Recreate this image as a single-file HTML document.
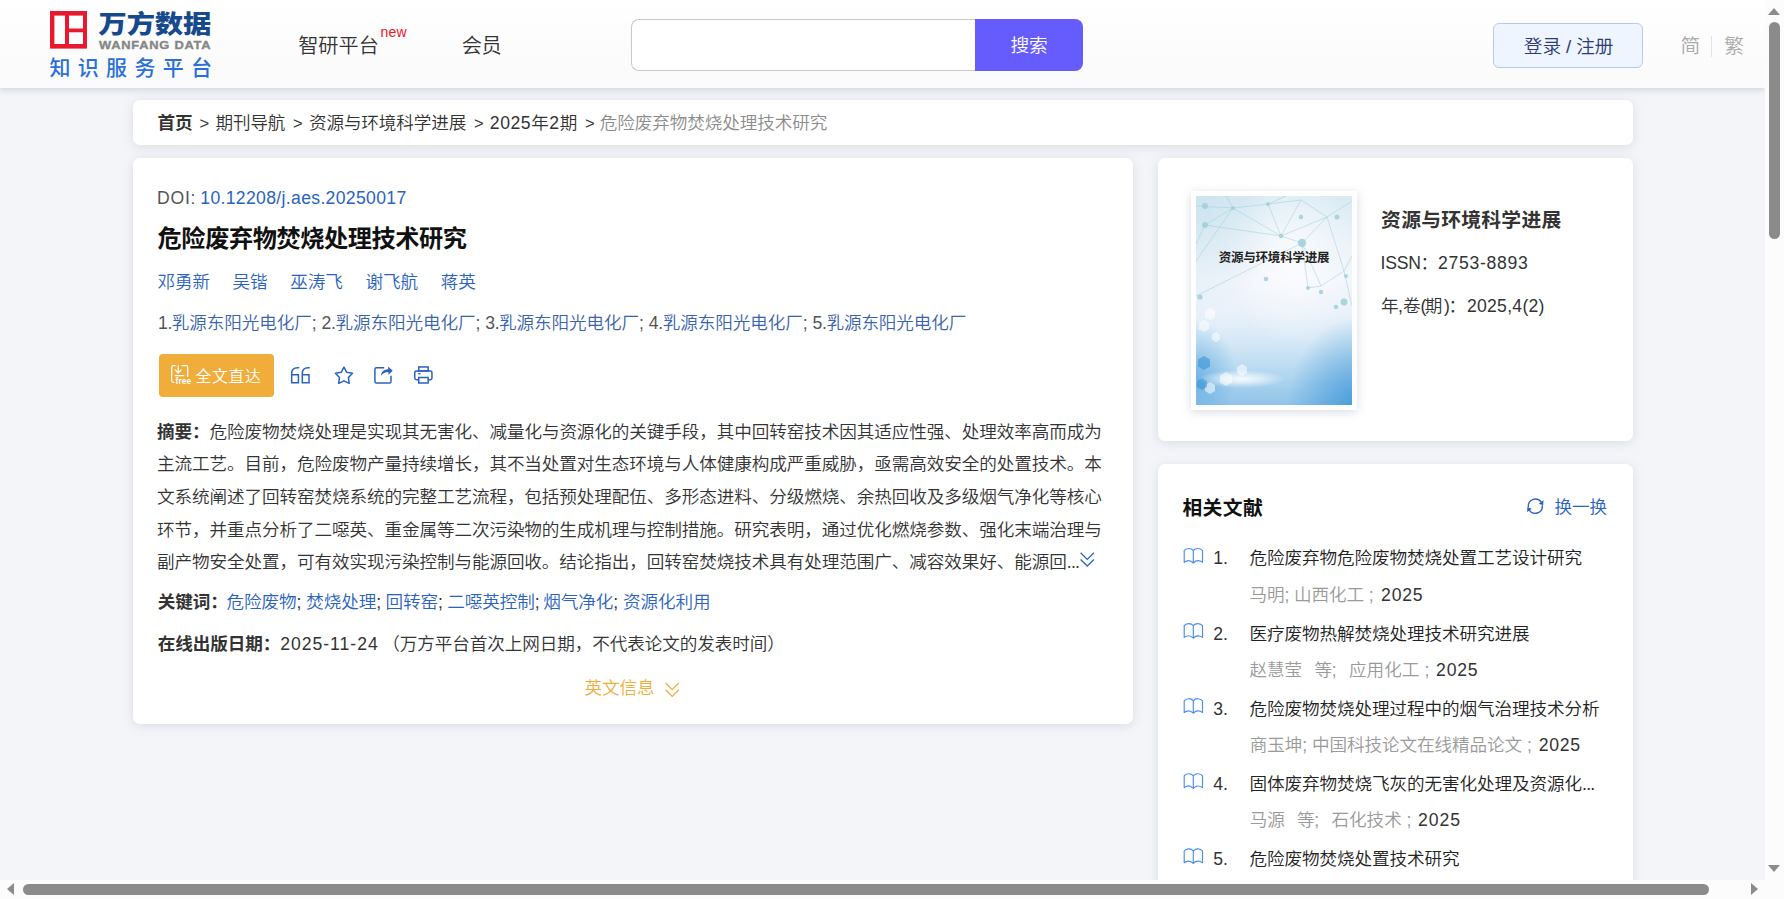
<!DOCTYPE html>
<html lang="zh-CN">
<head>
<meta charset="utf-8">
<title>危险废弃物焚烧处理技术研究</title>
<style>
*{box-sizing:border-box;margin:0;padding:0}
html,body{width:1784px;height:899px;overflow:hidden}
body{background:#f3f5f9;font-family:"Liberation Sans","Noto Sans CJK SC",sans-serif;color:#333;font-size:17.6px;position:relative}
.abs{position:absolute;white-space:nowrap}
.t{position:absolute;white-space:nowrap;line-height:32px}
#page{position:absolute;left:0;top:0;width:1765px;height:880px;overflow:hidden;background:#f3f5f9}
#hdr{position:absolute;left:0;top:0;width:1765px;height:88px;background:linear-gradient(#ffffff,#fafafa);box-shadow:0 2px 6px rgba(120,130,150,.28)}
#sbox{position:absolute;left:631px;top:19px;width:346px;height:52px;border:1px solid #c9c9c9;border-right:none;border-radius:8px 0 0 8px;background:#fff}
#sbtn{position:absolute;left:975.300px;top:19px;width:107.700px;height:52px;background:#665cfe;border-radius:0 8px 8px 0}
#login{position:absolute;left:1493px;top:23px;width:150px;height:45px;background:#eef5fe;border:1px solid #b5cbee;border-radius:6px}
.card{position:absolute;background:#fff;border-radius:7px;box-shadow:0 2px 11px rgba(95,105,125,.17)}
#crumb{left:133px;top:100px;width:1500px;height:45px}
#main{left:133px;top:158px;width:1000px;height:566px}
#jcard{left:1158px;top:158px;width:475px;height:282.500px}
#rcard{left:1158px;top:464px;width:475px;height:440px}
#vsb{position:absolute;left:1765px;top:0;width:19px;height:880px;background:#fcfcfc}
#hsb{position:absolute;left:0;top:880px;width:1784px;height:19px;background:#fcfcfc}
.thumb{position:absolute;background:#8b8b8b;border-radius:6px}
.tri{position:absolute;width:0;height:0}
</style>
</head>
<body>
<div id="page">

<div id="hdr">
  <svg class="abs" style="left:50px;top:11.2px" width="37" height="37.6" viewBox="0 0 37 37.6">
    <rect x="0" y="0" width="37" height="37.6" fill="#e8192c"/>
    <rect x="4.4" y="4.6" width="10.6" height="28.4" fill="#fff"/>
    <rect x="19" y="4.600" width="14" height="12.9" fill="#fff"/>
    <rect x="19" y="21.3" width="14" height="11.7" fill="#fff"/>
  </svg>
  <div class="abs" id="lg1" style="left:98.6px;top:3.2px;font-size:28.3px;font-weight:900;color:#164a8d;line-height:40px;letter-spacing:-0.2px;transform:scaleY(.89);transform-origin:0 32.6px">万方数据</div>
  <div class="abs" id="lg2" style="left:99.3px;top:37.8px;font-size:11.2px;font-weight:bold;color:#868686;-webkit-text-stroke:0.35px #868686;line-height:14px;letter-spacing:0.66px;transform:scaleX(1.15);transform-origin:0 0">WANFANG DATA</div>
  <div class="abs" id="lg3" style="left:49.5px;top:53px;font-size:21px;color:#2a6fdb;line-height:30px;letter-spacing:7.3px;font-weight:500">知识服务平台</div>
  <div id="sbox"></div>
  <div id="sbtn"></div>
  <div id="login"></div>
  <div class="abs" style="left:1711px;top:36px;width:1px;height:21px;background:#e3e3e3"></div>
</div>

<div class="card" id="crumb"></div>
<div class="card" id="main">
  <div class="abs" id="ftbtn" style="left:26px;top:196px;width:115px;height:43px;background:#f0ad3a;border-radius:4px"></div>
<svg class="abs" style="left:27px;top:202px" width="290" height="32" viewBox="160 360 290 32">
  <g fill="none" stroke="#fff" stroke-width="1.25" stroke-linecap="round" stroke-linejoin="round">
    <path d="M175.3 365.7H173.2Q171.7 365.7 171.7 367.2V380.8Q171.7 382.3 173.2 382.3H174"/>
    <path d="M178.2 365.5V372.8M175.3 370L178.2 373L181.1 370"/>
    <path d="M182 365.7H186.200Q187.700 365.7 187.700 367.2V376.3"/>
    <path d="M175.300 375.600H183.800"/>
  </g>
  <text x="175.600" y="383.700" font-size="8.3" font-weight="bold" fill="#fff" font-family="'Liberation Sans',sans-serif" letter-spacing="0.1">free</text>
  <g fill="none" stroke="#2a62c0" stroke-width="1.5" stroke-linejoin="miter">
    <path d="M299.2 367.7H297.500Q291.700 367.700 291.700 373.500V382.800H298.400V374.700H291.700"/>
    <path d="M309.800 367.700H308.100Q302.300 367.700 302.300 373.500V382.800H309V374.700H302.300"/>
    <path d="M343.95 367.10 L346.71 372.30 L352.51 373.32 L348.42 377.55 L349.24 383.38 L343.95 380.80 L338.66 383.38 L339.48 377.55 L335.39 373.32 L341.19 372.30Z" stroke-linejoin="round"/>
    <path d="M384.200 367.800H376.400Q374.900 367.800 374.900 369.300V381.500Q374.900 383 376.400 383H389.500Q391 383 391 381.500V375.800"/>
    <rect x="418.750" y="366.950" width="9.400" height="4" />
    <rect x="414.750" y="370.900" width="17.200" height="8.800" rx="1.600"/>
    <rect x="418.750" y="377.500" width="9.400" height="5.500" fill="#fff"/>
    <path d="M418.200 373.700H420.600" stroke-width="1.300"/>
  </g>
  <path d="M380.800 376C381.300 371.600 384 369.300 388.200 369.200L388.100 366.400L392.700 370.700L388.500 374.700L388.400 372.100C385 372.100 382.600 373.300 380.800 376Z" fill="#2a62c0"/>
</svg>
<svg class="abs" style="left:940px;top:390px" width="30" height="24" viewBox="1073 548 30 24"><g fill="none" stroke="#2a67cc" stroke-width="1.35"><path d="M1080.600 552.800L1087.250 559.400L1093.900 552.800"/><path d="M1080.600 559.500L1087.250 566.100L1093.900 559.500"/></g></svg>
<svg class="abs" style="left:527px;top:520px" width="30" height="24" viewBox="660 678 30 24"><g fill="none" stroke="#f0ad3a" stroke-width="1.25"><path d="M665.600 683L672.200 689.700L678.800 683"/><path d="M665.600 689.700L672.200 696.400L678.800 689.700"/></g></svg>
</div>
<div class="card" id="jcard">
  <div class="abs" id="cover" style="left:33px;top:33px;width:166px;height:219px;background:#fff;box-shadow:0 2px 9px rgba(120,140,170,.30)">
    <svg class="abs" style="left:5px;top:5px" width="156" height="209" viewBox="0 0 156 209">
      <defs>
        <linearGradient id="cg1" x1="0" y1="0" x2="0" y2="1">
          <stop offset="0" stop-color="#d9eaf3"/><stop offset=".2" stop-color="#e8f1f8"/><stop offset=".4" stop-color="#f2f5fb"/><stop offset=".56" stop-color="#e9f1fa"/><stop offset=".7" stop-color="#d5e8f6"/><stop offset=".85" stop-color="#b3d7f0"/><stop offset="1" stop-color="#90c4e9"/>
        </linearGradient>
        <radialGradient id="cg2" cx=".62" cy=".3" r=".42"><stop offset="0" stop-color="#fff" stop-opacity=".7"/><stop offset="1" stop-color="#fff" stop-opacity="0"/></radialGradient>
        <radialGradient id="cg3" cx="1.04" cy="1.04" r=".46"><stop offset="0" stop-color="#3a95d8" stop-opacity=".9"/><stop offset="1" stop-color="#3a95d8" stop-opacity="0"/></radialGradient>
        <radialGradient id="cg4" cx="0" cy=".86" r=".26"><stop offset="0" stop-color="#4a9fdc" stop-opacity=".6"/><stop offset="1" stop-color="#4a9fdc" stop-opacity="0"/></radialGradient>
        <radialGradient id="cg5" cx=".5" cy=".5" r=".5"><stop offset="0" stop-color="#fff" stop-opacity="1"/><stop offset=".35" stop-color="#fff" stop-opacity=".7"/><stop offset="1" stop-color="#fff" stop-opacity="0"/></radialGradient>
        <radialGradient id="cg6" cx="0" cy=".08" r=".5"><stop offset="0" stop-color="#b7d9e8" stop-opacity=".4"/><stop offset="1" stop-color="#b7d9e8" stop-opacity="0"/></radialGradient>
      </defs>
      <rect width="156" height="209" fill="url(#cg1)"/>
      <rect width="156" height="209" fill="url(#cg2)"/>
      <rect width="156" height="209" fill="url(#cg3)"/>
      <rect width="156" height="209" fill="url(#cg4)"/>
      <rect width="156" height="209" fill="url(#cg6)"/>
      <g stroke="#9fcfd9" stroke-width=".7" fill="none" opacity=".75">
        <path d="M0 10 L37 12 L9 29 L0 48 M37 12 L72 8 L85 40 L37 12 M72 8 L105 4 L85 40 L131 21 L105 4 M131 21 L156 5 M131 21 L148 75 L156 60 M85 40 L106 47 L131 21 M106 47 L125 90 L148 75 M9 29 L85 40 M0 65 L37 12 M0 100 L60 70 L106 47 M125 90 L112 92 L106 47 M72 8 L90 0 M37 12 L30 0 M148 75 L156 110"/>
      </g>
      <g fill="#9fd0da" opacity=".85">
        <circle cx="9" cy="10" r="3"/><circle cx="37" cy="12" r="2"/><circle cx="9" cy="29" r="3"/><circle cx="72" cy="8" r="2"/><circle cx="85" cy="40" r="2.2"/><circle cx="105" cy="21" r="2.2"/><circle cx="106" cy="47" r="4.2"/><circle cx="141" cy="21" r="2.5"/><circle cx="70" cy="83" r="2.3"/><circle cx="112" cy="92" r="2"/><circle cx="125" cy="96" r="2.2"/><circle cx="148" cy="106" r="3.4"/><circle cx="4" cy="101" r="2.6"/><circle cx="140" cy="111" r="2.2"/><circle cx="150" cy="80" r="2"/>
      </g>
      <g fill="#fff" opacity=".55">
        <path d="M14 112l5 3v6l-5 3l-5-3v-6z M8 124l5 3v6l-5 3l-5-3v-6z M20 136l4 2.5v5l-4 2.5l-4-2.5v-5z M30 176l6 3.5v7l-6 3.5l-6-3.5v-7z M14 186l5 3v6l-5 3l-5-3v-6z M46 168l5 3v6l-5 3l-5-3v-6z"/>
      </g>
      <g fill="#2f8fd6" opacity=".55"><path d="M8 160l6 3.5v7l-6 3.5l-6-3.5v-7z M6 182l5 3v6l-5 3l-5-3v-6z"/></g>
      <ellipse cx="46" cy="183" rx="44" ry="9" fill="url(#cg5)" opacity=".9"/>
      <text x="78" y="66" text-anchor="middle" font-size="12.5" font-weight="bold" fill="#222" letter-spacing="-0.2" font-family="'Liberation Sans','Noto Sans CJK SC',sans-serif">资源与环境科学进展</text>
    </svg>
  </div>
</div>
<div class="card" id="rcard">
<svg class="abs" style="left:0;top:0" width="475" height="416" viewBox="1158 464 475 416">
<g fill="none" stroke="#4a8cf0" stroke-width="1.15" stroke-linejoin="round">
<path transform="translate(0 0.0)" d="M1184.2 562.3V550.6C1186 548 1191 547.600 1193.300 550.600C1195.600 547.600 1200.600 548 1202.500 550.600V562.300C1199.500 560.200 1196 560.300 1193.300 563C1190.600 560.300 1187 560.200 1184.200 562.300ZM1193.300 550.600V563"/>
<path transform="translate(0 75.1)" d="M1184.2 562.3V550.6C1186 548 1191 547.600 1193.300 550.600C1195.600 547.600 1200.600 548 1202.500 550.600V562.300C1199.500 560.200 1196 560.300 1193.300 563C1190.600 560.300 1187 560.200 1184.200 562.300ZM1193.300 550.600V563"/>
<path transform="translate(0 150.2)" d="M1184.2 562.3V550.6C1186 548 1191 547.600 1193.300 550.600C1195.600 547.600 1200.600 548 1202.500 550.600V562.300C1199.500 560.200 1196 560.300 1193.300 563C1190.600 560.300 1187 560.200 1184.200 562.300ZM1193.300 550.600V563"/>
<path transform="translate(0 225.3)" d="M1184.2 562.3V550.6C1186 548 1191 547.600 1193.300 550.600C1195.600 547.600 1200.600 548 1202.500 550.600V562.300C1199.500 560.200 1196 560.300 1193.300 563C1190.600 560.300 1187 560.200 1184.200 562.300ZM1193.300 550.600V563"/>
<path transform="translate(0 300.4)" d="M1184.2 562.3V550.6C1186 548 1191 547.600 1193.300 550.600C1195.600 547.600 1200.600 548 1202.500 550.600V562.300C1199.500 560.200 1196 560.300 1193.300 563C1190.600 560.300 1187 560.200 1184.200 562.300ZM1193.300 550.600V563"/>
</g>
<g fill="none" stroke="#2a62c0" stroke-width="1.35" stroke-linecap="round"><path d="M1528.300 506.600A7.100 7.100 0 0 1 1541.400 502.400"/><path d="M1542.300 505.800A7.100 7.100 0 0 1 1529.200 510"/></g>
<path d="M1543.500 500.300L1543.200 505.300L1538.800 503.700Z M1527.100 512.100L1527.400 507.100L1531.800 508.700Z" fill="#2a62c0"/>
</svg>
</div>

<div class="t" id="c0" style="left:298.20px;top:30.00px;font-size:20.2px;font-weight:350;color:#333;letter-spacing:-0.019px;">智研平台</div>
<div class="t" id="c1" style="left:380.40px;top:16.00px;font-size:14px;font-weight:400;color:#f3121f;letter-spacing:0.285px;">new</div>
<div class="t" id="c2" style="left:461.80px;top:30.00px;font-size:20.2px;font-weight:350;color:#333;letter-spacing:-0.594px;">会员</div>
<div class="t" id="c3" style="left:1010.60px;top:30.00px;font-size:18.7px;font-weight:350;color:#fff;letter-spacing:-0.383px;">搜索</div>
<div class="t" id="c4" style="left:1523.80px;top:31.00px;font-size:18.7px;font-weight:350;color:#2d3a76;letter-spacing:-0.097px;">登录 / 注册</div>
<div class="t" id="c5" style="left:1680.50px;top:30.00px;font-size:19.8px;font-weight:350;color:#a9a9a9;letter-spacing:0.000px;">简</div>
<div class="t" id="c6" style="left:1724.30px;top:30.00px;font-size:19.8px;font-weight:350;color:#a9a9a9;letter-spacing:0.000px;">繁</div>
<div class="t" id="c7" style="left:157.50px;top:107.00px;font-size:17.6px;font-weight:700;color:#333;letter-spacing:-0.100px;">首页</div>
<div class="t" id="c8" style="left:199.60px;top:108.00px;font-size:16.6px;font-weight:350;color:#333;letter-spacing:0.000px;">&gt;</div>
<div class="t" id="c9" style="left:215.40px;top:107.00px;font-size:17.6px;font-weight:350;color:#333;letter-spacing:-0.100px;">期刊导航</div>
<div class="t" id="c10" style="left:292.90px;top:108.00px;font-size:16.6px;font-weight:350;color:#333;letter-spacing:0.000px;">&gt;</div>
<div class="t" id="c11" style="left:308.90px;top:107.00px;font-size:17.6px;font-weight:350;color:#333;letter-spacing:-0.100px;">资源与环境科学进展</div>
<div class="t" id="c12" style="left:473.90px;top:108.00px;font-size:16.6px;font-weight:350;color:#333;letter-spacing:0.000px;">&gt;</div>
<div class="t" id="c13" style="left:489.80px;top:107.00px;font-size:17.6px;font-weight:350;color:#333;letter-spacing:0.565px;">2025年2期</div>
<div class="t" id="c14" style="left:584.90px;top:108.00px;font-size:16.6px;font-weight:350;color:#333;letter-spacing:0.000px;">&gt;</div>
<div class="t" id="c15" style="left:599.80px;top:107.00px;font-size:17.6px;font-weight:350;color:#8c8c8c;letter-spacing:-0.100px;">危险废弃物焚烧处理技术研究</div>
<div class="t" id="c16" style="left:157.00px;top:182.00px;font-size:17.6px;font-weight:350;color:#555;letter-spacing:0.779px;">DOI:</div>
<div class="t" id="c17" style="left:200.30px;top:182.00px;font-size:17.6px;font-weight:350;color:#2a62c0;letter-spacing:0.333px;">10.12208/j.aes.20250017</div>
<div class="t" id="c18" style="left:157.60px;top:223.00px;font-size:24.2px;font-weight:700;color:#111;letter-spacing:-0.420px;">危险废弃物焚烧处理技术研究</div>
<div class="t" id="c19" style="left:157.60px;top:266.00px;font-size:17.6px;font-weight:350;color:#2a62c0;letter-spacing:-0.100px;">邓勇新</div>
<div class="t" id="c20" style="left:232.50px;top:266.00px;font-size:17.6px;font-weight:350;color:#2a62c0;letter-spacing:-0.100px;">吴锴</div>
<div class="t" id="c21" style="left:290.20px;top:266.00px;font-size:17.6px;font-weight:350;color:#2a62c0;letter-spacing:-0.100px;">巫涛飞</div>
<div class="t" id="c22" style="left:365.50px;top:266.00px;font-size:17.6px;font-weight:350;color:#2a62c0;letter-spacing:-0.100px;">谢飞航</div>
<div class="t" id="c23" style="left:440.80px;top:266.00px;font-size:17.6px;font-weight:350;color:#2a62c0;letter-spacing:-0.100px;">蒋英</div>
<div class="t" id="c24" style="left:157.90px;top:307.00px;font-size:17.6px;font-weight:350;color:#555;letter-spacing:-0.258px;">1.</div>
<div class="t" id="c25" style="left:171.80px;top:307.00px;font-size:17.6px;font-weight:350;color:#3a63ad;letter-spacing:-0.100px;">乳源东阳光电化厂<span style="color:#555">;</span></div>
<div class="t" id="c26" style="left:321.55px;top:307.00px;font-size:17.6px;font-weight:350;color:#555;letter-spacing:-0.258px;">2.</div>
<div class="t" id="c27" style="left:335.45px;top:307.00px;font-size:17.6px;font-weight:350;color:#3a63ad;letter-spacing:-0.100px;">乳源东阳光电化厂<span style="color:#555">;</span></div>
<div class="t" id="c28" style="left:485.20px;top:307.00px;font-size:17.6px;font-weight:350;color:#555;letter-spacing:-0.258px;">3.</div>
<div class="t" id="c29" style="left:499.10px;top:307.00px;font-size:17.6px;font-weight:350;color:#3a63ad;letter-spacing:-0.100px;">乳源东阳光电化厂<span style="color:#555">;</span></div>
<div class="t" id="c30" style="left:648.85px;top:307.00px;font-size:17.6px;font-weight:350;color:#555;letter-spacing:-0.258px;">4.</div>
<div class="t" id="c31" style="left:662.75px;top:307.00px;font-size:17.6px;font-weight:350;color:#3a63ad;letter-spacing:-0.100px;">乳源东阳光电化厂<span style="color:#555">;</span></div>
<div class="t" id="c32" style="left:812.50px;top:307.00px;font-size:17.6px;font-weight:350;color:#555;letter-spacing:-0.258px;">5.</div>
<div class="t" id="c33" style="left:826.40px;top:307.00px;font-size:17.6px;font-weight:350;color:#3a63ad;letter-spacing:-0.100px;">乳源东阳光电化厂</div>
<div class="t" id="c34" style="left:195.40px;top:361.00px;font-size:15.8px;font-weight:350;color:#fff;letter-spacing:0.713px;">全文直达</div>
<div class="t" id="c35" style="left:157.00px;top:416.00px;font-size:17.6px;font-weight:700;color:#333;letter-spacing:-0.100px;">摘要：</div>
<div class="t" id="c36" style="left:209.50px;top:416.00px;font-size:17.6px;font-weight:350;color:#333;letter-spacing:-0.100px;">危险废物焚烧处理是实现其无害化、减量化与资源化的关键手段，其中回转窑技术因其适应性强、处理效率高而成为</div>
<div class="t" id="c37" style="left:157.00px;top:448.00px;font-size:17.6px;font-weight:350;color:#333;letter-spacing:-0.100px;">主流工艺。目前，危险废物产量持续增长，其不当处置对生态环境与人体健康构成严重威胁，亟需高效安全的处置技术。本</div>
<div class="t" id="c38" style="left:157.00px;top:481.00px;font-size:17.6px;font-weight:350;color:#333;letter-spacing:-0.100px;">文系统阐述了回转窑焚烧系统的完整工艺流程，包括预处理配伍、多形态进料、分级燃烧、余热回收及多级烟气净化等核心</div>
<div class="t" id="c39" style="left:157.00px;top:514.00px;font-size:17.6px;font-weight:350;color:#333;letter-spacing:-0.100px;">环节，并重点分析了二噁英、重金属等二次污染物的生成机理与控制措施。研究表明，通过优化燃烧参数、强化末端治理与</div>
<div class="t" id="c40" style="left:157.00px;top:546.00px;font-size:17.6px;font-weight:350;color:#333;letter-spacing:-0.100px;">副产物安全处置，可有效实现污染控制与能源回收。结论指出，回转窑焚烧技术具有处理范围广、减容效果好、能源回<span style="letter-spacing:-0.7px">...</span></div>
<div class="t" id="c41" style="left:157.70px;top:586.00px;font-size:17.6px;font-weight:700;color:#333;letter-spacing:-0.100px;">关键词：</div>
<div class="t" id="c42" style="left:226.60px;top:586.00px;font-size:17.6px;font-weight:350;color:#2a62c0;letter-spacing:-0.100px;">危险废物<span style="color:#333">;</span></div>
<div class="t" id="c43" style="left:306.30px;top:586.00px;font-size:17.6px;font-weight:350;color:#2a62c0;letter-spacing:-0.100px;">焚烧处理<span style="color:#333">;</span></div>
<div class="t" id="c44" style="left:385.60px;top:586.00px;font-size:17.6px;font-weight:350;color:#2a62c0;letter-spacing:-0.100px;">回转窑<span style="color:#333">;</span></div>
<div class="t" id="c45" style="left:447.20px;top:586.00px;font-size:17.6px;font-weight:350;color:#2a62c0;letter-spacing:-0.100px;">二噁英控制<span style="color:#333">;</span></div>
<div class="t" id="c46" style="left:543.30px;top:586.00px;font-size:17.6px;font-weight:350;color:#2a62c0;letter-spacing:-0.100px;">烟气净化<span style="color:#333">;</span></div>
<div class="t" id="c47" style="left:623.00px;top:586.00px;font-size:17.6px;font-weight:350;color:#2a62c0;letter-spacing:-0.100px;">资源化利用</div>
<div class="t" id="c48" style="left:157.70px;top:628.00px;font-size:17.6px;font-weight:700;color:#333;letter-spacing:-0.100px;">在线出版日期：</div>
<div class="t" id="c49" style="left:280.20px;top:628.00px;font-size:17.6px;font-weight:350;color:#333;letter-spacing:0.979px;">2025-11-24</div>
<div class="t" id="c50" style="left:382.30px;top:628.00px;font-size:17.6px;font-weight:350;color:#333;letter-spacing:-0.100px;">（万方平台首次上网日期，不代表论文的发表时间）</div>
<div class="t" id="c51" style="left:584.50px;top:672.00px;font-size:17.6px;font-weight:350;color:#f0ad3a;letter-spacing:-0.100px;">英文信息</div>
<div class="t" id="c52" style="left:1381.10px;top:204.00px;font-size:19.8px;font-weight:700;color:#333;letter-spacing:0.265px;">资源与环境科学进展</div>
<div class="t" id="c53" style="left:1380.50px;top:247.00px;font-size:17.6px;font-weight:350;color:#333;letter-spacing:-0.165px;">ISSN</div>
<div class="t" id="c54" style="left:1420.40px;top:247.00px;font-size:17.6px;font-weight:350;color:#333;letter-spacing:0.000px;">：</div>
<div class="t" id="c55" style="left:1438.10px;top:247.00px;font-size:17.6px;font-weight:350;color:#333;letter-spacing:0.701px;">2753-8893</div>
<div class="t" id="c56" style="left:1381.10px;top:290.00px;font-size:17.6px;font-weight:350;color:#333;letter-spacing:-0.100px;">年</div>
<div class="t" id="c57" style="left:1398.10px;top:290.00px;font-size:17.6px;font-weight:350;color:#333;letter-spacing:0.000px;">,</div>
<div class="t" id="c58" style="left:1402.90px;top:290.00px;font-size:17.6px;font-weight:350;color:#333;letter-spacing:-0.100px;">卷</div>
<div class="t" id="c59" style="left:1420.50px;top:290.00px;font-size:17.6px;font-weight:350;color:#333;letter-spacing:0.000px;">(</div>
<div class="t" id="c60" style="left:1424.70px;top:290.00px;font-size:17.6px;font-weight:350;color:#333;letter-spacing:-0.100px;">期</div>
<div class="t" id="c61" style="left:1444.00px;top:290.00px;font-size:17.6px;font-weight:350;color:#333;letter-spacing:0.000px;">)</div>
<div class="t" id="c62" style="left:1448.40px;top:290.00px;font-size:17.6px;font-weight:350;color:#333;letter-spacing:0.000px;">：</div>
<div class="t" id="c63" style="left:1466.90px;top:290.00px;font-size:17.6px;font-weight:350;color:#333;letter-spacing:0.279px;">2025,4(2)</div>
<div class="t" id="c64" style="left:1182.40px;top:492.00px;font-size:19.8px;font-weight:700;color:#111;letter-spacing:0.388px;">相关文献</div>
<div class="t" id="c65" style="left:1554.50px;top:491.00px;font-size:17.6px;font-weight:350;color:#2a62c0;letter-spacing:-0.100px;">换一换</div>
<div class="t" id="c66" style="left:1213.20px;top:542.00px;font-size:17.6px;font-weight:350;color:#333;letter-spacing:-0.058px;">1.</div>
<div class="t" id="c67" style="left:1249.60px;top:542.00px;font-size:17.6px;font-weight:350;color:#222;letter-spacing:-0.100px;">危险废弃物危险废物焚烧处置工艺设计研究</div>
<div class="t" id="c68" style="left:1213.20px;top:618.00px;font-size:17.6px;font-weight:350;color:#333;letter-spacing:-0.058px;">2.</div>
<div class="t" id="c69" style="left:1249.60px;top:618.00px;font-size:17.6px;font-weight:350;color:#222;letter-spacing:-0.100px;">医疗废物热解焚烧处理技术研究进展</div>
<div class="t" id="c70" style="left:1213.20px;top:693.00px;font-size:17.6px;font-weight:350;color:#333;letter-spacing:-0.058px;">3.</div>
<div class="t" id="c71" style="left:1249.60px;top:693.00px;font-size:17.6px;font-weight:350;color:#222;letter-spacing:-0.100px;">危险废物焚烧处理过程中的烟气治理技术分析</div>
<div class="t" id="c72" style="left:1213.20px;top:768.00px;font-size:17.6px;font-weight:350;color:#333;letter-spacing:-0.058px;">4.</div>
<div class="t" id="c73" style="left:1249.60px;top:768.00px;font-size:17.6px;font-weight:350;color:#222;letter-spacing:-0.100px;">固体废弃物焚烧飞灰的无害化处理及资源化<span style="letter-spacing:-0.7px">...</span></div>
<div class="t" id="c74" style="left:1213.20px;top:843.00px;font-size:17.6px;font-weight:350;color:#333;letter-spacing:-0.058px;">5.</div>
<div class="t" id="c75" style="left:1249.60px;top:843.00px;font-size:17.6px;font-weight:350;color:#222;letter-spacing:-0.100px;">危险废物焚烧处置技术研究</div>
<div class="t" id="c76" style="left:1249.60px;top:579.00px;font-size:17.6px;font-weight:350;color:#9a9a9a;letter-spacing:-0.118px;">马明; 山西化工 ;</div>
<div class="t" id="c77" style="left:1381.10px;top:579.00px;font-size:17.6px;font-weight:350;color:#333;letter-spacing:0.760px;">2025</div>
<div class="t" id="c78" style="left:1249.60px;top:654.00px;font-size:17.6px;font-weight:350;color:#9a9a9a;letter-spacing:-0.100px;">赵慧莹</div>
<div class="t" id="c79" style="left:1314.60px;top:654.00px;font-size:17.6px;font-weight:350;color:#9a9a9a;letter-spacing:-0.323px;">等;</div>
<div class="t" id="c80" style="left:1349.00px;top:654.00px;font-size:17.6px;font-weight:350;color:#9a9a9a;letter-spacing:0.026px;">应用化工 ;</div>
<div class="t" id="c81" style="left:1436.10px;top:654.00px;font-size:17.6px;font-weight:350;color:#333;letter-spacing:0.788px;">2025</div>
<div class="t" id="c82" style="left:1249.70px;top:729.00px;font-size:17.6px;font-weight:350;color:#9a9a9a;letter-spacing:-0.074px;">商玉坤; 中国科技论文在线精品论文 ;</div>
<div class="t" id="c83" style="left:1538.70px;top:729.00px;font-size:17.6px;font-weight:350;color:#333;letter-spacing:0.703px;">2025</div>
<div class="t" id="c84" style="left:1249.70px;top:804.00px;font-size:17.6px;font-weight:350;color:#9a9a9a;letter-spacing:-0.100px;">马源</div>
<div class="t" id="c85" style="left:1297.10px;top:804.00px;font-size:17.6px;font-weight:350;color:#9a9a9a;letter-spacing:-0.390px;">等;</div>
<div class="t" id="c86" style="left:1331.60px;top:804.00px;font-size:17.6px;font-weight:350;color:#9a9a9a;letter-spacing:-0.083px;">石化技术 ;</div>
<div class="t" id="c87" style="left:1418.10px;top:804.00px;font-size:17.6px;font-weight:350;color:#333;letter-spacing:0.960px;">2025</div>
</div>

<div id="vsb">
  <div class="tri" style="left:3px;top:8px;border-left:6.5px solid transparent;border-right:6.5px solid transparent;border-bottom:7px solid #8b8b8b"></div>
  <div class="thumb" style="left:4px;top:22px;width:11px;height:217px"></div>
  <div class="tri" style="left:3px;top:865px;border-left:6.5px solid transparent;border-right:6.5px solid transparent;border-top:7px solid #8b8b8b"></div>
</div>
<div id="hsb">
  <div class="tri" style="left:7px;top:3px;border-top:6.5px solid transparent;border-bottom:6.5px solid transparent;border-right:7px solid #8b8b8b"></div>
  <div class="thumb" style="left:23px;top:4px;width:1686px;height:11px"></div>
  <div class="tri" style="left:1751px;top:3px;border-top:6.5px solid transparent;border-bottom:6.5px solid transparent;border-left:7px solid #8b8b8b"></div>
</div>
</body>
</html>
